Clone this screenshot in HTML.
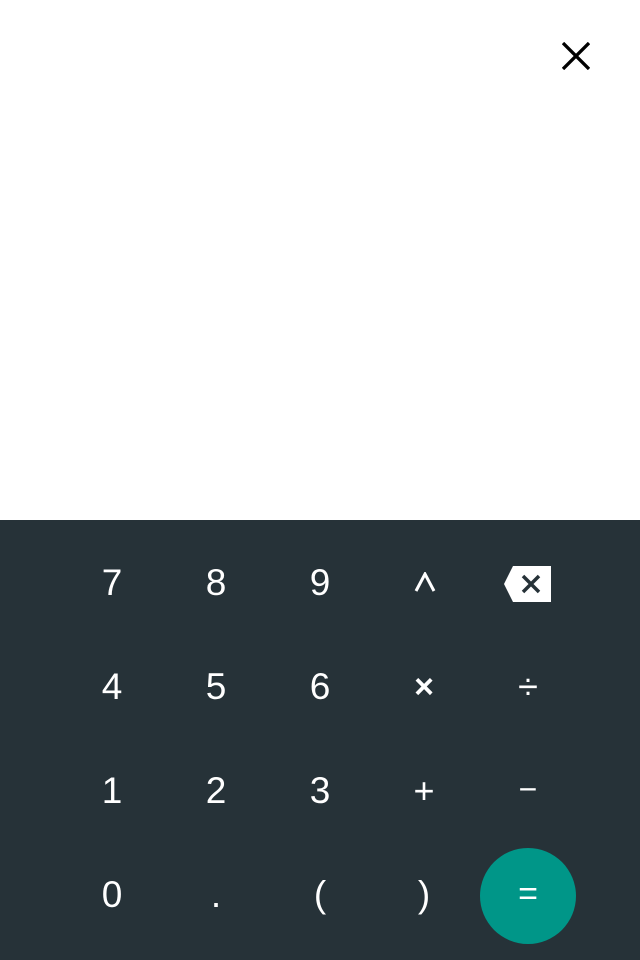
<!DOCTYPE html>
<html><head><style>
body{margin:0;width:640px;height:960px;background:#fff;position:relative;overflow:hidden;font-family:"Liberation Sans",sans-serif}
.pad{position:absolute;left:0;top:520px;width:640px;height:440px;background:#263238}
.k{position:absolute;width:80px;height:60px;margin-left:-40px;margin-top:-30px;color:#fff;font-size:37px;text-align:center;line-height:60px}
.eq{position:absolute;left:480px;top:848px;width:96px;height:96px;border-radius:50%;background:#009688;color:#fff;font-size:34px;text-align:center;line-height:92px}
</style></head><body>
<svg style="position:absolute;left:562px;top:42px" width="28" height="28" viewBox="0 0 28 28"><path d="M1 1L27 27M27 1L1 27" stroke="#000" stroke-width="3.3"/></svg>
<div class="pad"></div>
<div class="k" style="left:112px;top:583px">7</div>
<div class="k" style="left:216px;top:583px">8</div>
<div class="k" style="left:320px;top:583px">9</div>
<svg style="position:absolute;left:414px;top:572px" width="22" height="20" viewBox="0 0 22 20"><path d="M2 19L11 2L20 19" stroke="#fff" stroke-width="3" fill="none"/></svg>
<svg style="position:absolute;left:503px;top:565px" width="50" height="38" viewBox="0 0 50 38"><path d="M10 1H48V37H10L1 19Z" fill="#fff"/><path d="M20 11L36 27M36 11L20 27" stroke="#263238" stroke-width="3.5"/></svg>
<div class="k" style="left:112px;top:687px">4</div>
<div class="k" style="left:216px;top:687px">5</div>
<div class="k" style="left:320px;top:687px">6</div>
<div class="k" style="left:424px;top:687px;font-size:34px;font-weight:bold">×</div>
<div class="k" style="left:528px;top:687px;font-size:36px">÷</div>
<div class="k" style="left:112px;top:791px">1</div>
<div class="k" style="left:216px;top:791px">2</div>
<div class="k" style="left:320px;top:791px">3</div>
<div class="k" style="left:424px;top:791px;font-size:36px">+</div>
<div class="k" style="left:528px;top:789px;font-size:32px">−</div>
<div class="k" style="left:112px;top:895px">0</div>
<div class="k" style="left:216px;top:895px">.</div>
<div class="k" style="left:320px;top:895px">(</div>
<div class="k" style="left:424px;top:895px">)</div>
<div class="eq">=</div>
</body></html>
